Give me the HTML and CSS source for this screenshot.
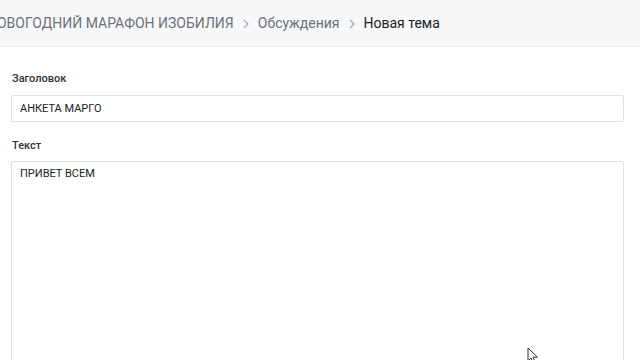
FILE: index.html
```html
<!DOCTYPE html>
<html lang="ru">
<head>
    <meta charset="UTF-8">
    <title>Новая тема</title>
    <link rel="stylesheet" href="styles.css">
</head>
<body>
    <div class="page">
        <div class="header">
            <div class="breadcrumbs">
                <a class="crumb" href="#">НОВОГОДНИЙ МАРАФОН ИЗОБИЛИЯ</a>
                <svg class="sep" width="6" height="10" viewBox="0 0 6 10"><path d="M1 1 L5 5 L1 9" fill="none" stroke="#a3a8ae" stroke-width="1.2"/></svg>
                <a class="crumb" href="#">Обсуждения</a>
                <svg class="sep" width="6" height="10" viewBox="0 0 6 10"><path d="M1 1 L5 5 L1 9" fill="none" stroke="#a3a8ae" stroke-width="1.2"/></svg>
                <span class="crumb current">Новая тема</span>
            </div>
        </div>

        <form class="topic-form">
            <label class="field-label" for="title">Заголовок</label>
            <input class="field-input" id="title" type="text" value="АНКЕТА МАРГО">

            <label class="field-label second" for="text">Текст</label>
            <textarea class="field-area" id="text">ПРИВЕТ ВСЕМ</textarea>
        </form>
    </div>

    <!-- курсор мыши -->
    <svg class="cursor" width="12" height="18" viewBox="0 0 12 18">
        <path d="M1 1 L1 14 L4 11 L6.5 16.5 L8.5 15.6 L6 10.2 L10.5 10.2 Z" fill="#fff" stroke="#333" stroke-width="1"/>
    </svg>
</body>
</html>
```

FILE: styles.css
```css
body { margin: 0; background: #fff; font-family: Roboto, "Noto Sans", sans-serif; color: #222; overflow: hidden; }
.page { width: 640px; height: 360px; overflow: hidden; }

.header { height: 46px; background: #f7f8fa; border-bottom: 1px solid #eceef1; display: flex; align-items: center; }
.breadcrumbs { display: flex; align-items: center; gap: 9px; margin-left: -13px; white-space: nowrap; font-size: 14px; }
.crumb { color: #6d7278; text-decoration: none; }
.current { color: #222; }
.sep { margin: 1px 0 0; }

.topic-form { display: flex; flex-direction: column; padding: 0 16px 0 11px; }
.field-label { font-size: 11px; font-weight: 500; color: #333; margin: 25px 0 10px 1px; }
.field-label.second { margin-top: 17px; margin-bottom: 9px; }
.field-input, .field-area {
    box-sizing: border-box;
    width: 100%;
    border: 1px solid #dfe1e5;
    border-radius: 2px;
    font-family: inherit;
    font-size: 11px;
    color: #222;
    padding: 0 8px;
    background: #fff;
}
.field-input { height: 27px; }
.field-area { height: 230px; padding-top: 5px; resize: none; }

.cursor { position: absolute; left: 527px; top: 347px; }
```
